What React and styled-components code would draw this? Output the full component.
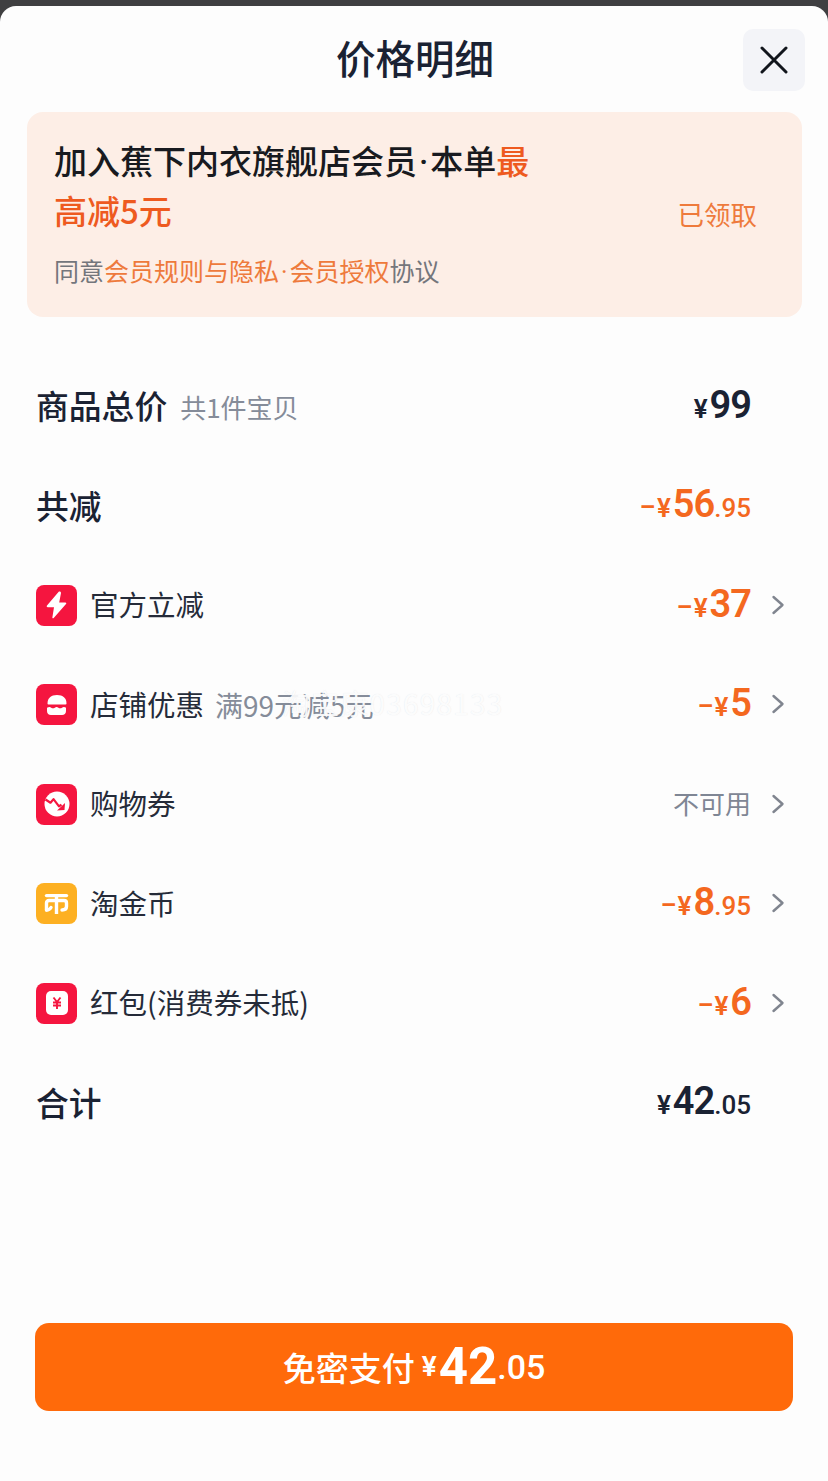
import React from 'react';
import styled, { createGlobalStyle } from 'styled-components';

const Global = createGlobalStyle`
  html, body { margin: 0; padding: 0; background: #3f3f41; }
  body { font-family: "Noto Sans CJK SC", "Noto Sans", sans-serif; }
  * { box-sizing: border-box; }
`;

const Page = styled.div`
  width: 828px;
  height: 1481px;
  padding-top: 6px;
  overflow: hidden;
`;
const Sheet = styled.div`
  height: 1475px;
  background: #fdfdfd;
  border-radius: 16px 16px 0 0;
  display: flex;
  flex-direction: column;
  padding: 23px 23px 70px 27px;
`;
const Header = styled.header`
  display: grid;
  grid-template-columns: 62px 1fr 62px;
  align-items: center;
  height: 62px;
`;
const Title = styled.h1`
  grid-column: 2;
  margin: -6px 2px 0 0;
  text-align: center;
  font-size: 39.5px;
  line-height: 60px;
  font-weight: 500;
  color: #1a2233;
`;
const Close = styled.button`
  grid-column: 3;
  width: 62px;
  height: 62px;
  border: 0;
  border-radius: 10px;
  background: #f3f4f8;
  display: flex;
  align-items: center;
  justify-content: center;
  padding: 0;
`;
const Banner = styled.section`
  margin-top: 21px;
  width: 775px;
  height: 205px;
  background: #fdeee6;
  border-radius: 16px;
  padding: 23px 45px 0 27px;
  display: grid;
  grid-template-columns: 480px 1fr;
  grid-template-rows: 100px auto;
`;
const BannerTitle = styled.div`
  font-size: 33px;
  line-height: 50px;
  font-weight: 500;
  color: #181a20;
`;
const Dot = styled.span`
  font-family: "Roboto", sans-serif;
  line-height: 0;
  margin: 0 ${p => p.$m}px;
`;
const Accent = styled.span`
  color: ${p => p.$c || '#ee5a1f'};
`;
const Claimed = styled.div`
  align-self: end;
  justify-self: end;
  font-size: 26.5px;
  line-height: 36px;
  color: #ee7a3c;
  margin-bottom: 3px;
`;
const Agree = styled.div`
  grid-column: 1 / span 2;
  margin-top: 17px;
  font-size: 25px;
  line-height: 36px;
  color: #74767c;
`;
const Rows = styled.div`
  margin-top: 38px;
  margin-left: 9px;
  display: flex;
  flex-direction: column;
`;
const Row = styled.div`
  position: relative;
  height: 99.5px;
  display: flex;
  align-items: center;
  padding-right: 20px;
`;
const Strong = styled.div`
  font-size: 32.8px;
  font-weight: 500;
  color: #1a2233;
`;
const Sub = styled.span`
  margin: 3px 0 0 ${p => p.$ml}px;
  font-size: ${p => p.$fs}px;
  color: #858c99;
`;
const IconBox = styled.span`
  width: 41px;
  height: 41px;
  margin: 3px 13px 0 0;
  flex: none;
  border-radius: 8px;
  background: ${p => p.$bg || '#f5153f'};
  display: flex;
  align-items: center;
  justify-content: center;
`;
const Label = styled.span`
  font-size: 28.5px;
  color: #252b39;
`;
const Right = styled.div`
  margin-left: auto;
  display: flex;
  align-items: center;
  justify-content: flex-end;
`;
const Amount = styled.div`
  width: 180px;
  margin-right: ${p => (p.$arrow ? 20 : 34)}px;
  text-align: right;
  font-family: "Roboto", sans-serif;
  font-weight: 600;
  white-space: nowrap;
  color: ${p => (p.$orange ? '#f4681f' : '#1a2233')};
`;
const Sign = styled.span`
  font-size: 26px;
  margin-right: 2px;
`;
const Dash = styled.span`
  display: inline-block;
  font-size: 26px;
  transform: translateY(-2px) scaleX(1.8);
  margin-right: 4px;
`;
const Big = styled.span`
  font-size: 38px;
  letter-spacing: -1px;
`;
const Small = styled.span`
  font-size: 26px;
  font-weight: 500;
`;
const Unavailable = styled.span`
  margin-right: 20px;
  font-size: 26px;
  color: #7f8694;
`;
const Watermark = styled.span`
  position: absolute;
  left: 246px;
  top: 50%;
  transform: translateY(-50%);
  font-size: 28px;
  letter-spacing: 1.2px;
  color: rgba(255, 255, 255, 0.9);
  text-shadow: 0 0 1px rgba(190, 195, 205, 0.4);
  white-space: nowrap;
`;
const Pay = styled.button`
  margin-top: auto;
  margin-left: 8px;
  width: 758px;
  height: 88px;
  border: 0;
  border-radius: 14px;
  background: #ff6a0a;
  color: #fff;
  display: flex;
  align-items: center;
  justify-content: center;
  font-family: inherit;
  padding: 0;
`;
const PayLabel = styled.span`
  font-size: 33px;
  font-weight: 500;
  margin-right: 7px;
`;
const PayNum = styled.span`
  font-family: "Roboto", sans-serif;
  font-weight: ${p => p.$w};
  font-size: ${p => p.$fs}px;
  margin-right: ${p => p.$mr || 0}px;
  line-height: 60px;
`;

const Chevron = () => (
  <svg width="14" height="20" viewBox="0 0 14 20" fill="none" stroke="#80858f" strokeWidth="2.4" strokeLinecap="round" strokeLinejoin="round" style={{ marginTop: 2 }}>
    <path d="M2.5 2l9 8-9 8" />
  </svg>
);
const X = () => (
  <svg width="28" height="28" viewBox="0 0 28 28" fill="none" stroke="#11151c" strokeWidth="3" strokeLinecap="round">
    <path d="M2 2l24 24M26 2L2 26" />
  </svg>
);
const Bolt = () => (
  <svg width="21" height="28" viewBox="0 0 21 28" fill="#fff">
    <path d="M12.500 1 1 14.500c-.6.8-.2 1.700.8 1.700h6.200L6.400 26.300c-.2 1 .7 1.300 1.300.6L20 13c.6-.7.3-1.600-.7-1.600h-6.100L15 2c.2-1.200-1.600-2-2.500-1z" />
  </svg>
);
const Store = () => (
  <svg width="22" height="22" viewBox="0 0 22 22" fill="#fff">
    <path d="M1.500 9.500C1.500 4 5 1 11 1s9.500 3 9.500 8.500c0 .6-.3.9-.9.900H2.400c-.6 0-.9-.3-.9-.900z" />
    <path d="M1 13.800c2-.9 3-.9 4.200-.1 1.200.8 2.400.8 3.600 0 1.200-.8 2.400-.8 3.600 0 1.200.8 2.400.8 3.600 0 1.200-.8 2.800-.8 4.000.1v3.200c0 2.400-1.600 4-4 4H5c-2.400 0-4-1.600-4-4z" />
  </svg>
);
const Coupon = () => (
  <svg width="26" height="26" viewBox="0 0 26 26">
    <circle cx="13" cy="13" r="12.500" fill="#fff" />
    <path d="M1.500 8.500l5 3.200 3-3.600 5.500 7.200 2.500-1.500" fill="none" stroke="#f5153f" strokeWidth="2.200" strokeLinejoin="round" />
    <path d="M13 19.500l7.500-.5.500-7z" fill="#f5153f" />
  </svg>
);
const Coin = () => (
  <svg width="25" height="22" viewBox="0 0 25 22" fill="none" stroke="#fff" strokeWidth="3.400">
    <path d="M2.500 2.600h20" strokeLinecap="round" />
    <path d="M12.500 3v18" />
    <path d="M2.500 17V10c0-1.500 1-2.500 2.500-2.500h15c1.500 0 2.500 1 2.500 2.500v3.500c0 2.500-1.500 3.500-4.500 3.500" strokeLinecap="round" />
    <path d="M2.500 17c2 0 3.500-.8 4.500-2.500" strokeLinecap="round" />
  </svg>
);
const Packet = () => (
  <svg width="22" height="24" viewBox="0 0 22 24">
    <rect width="22" height="24" rx="5" fill="#fff" />
    <path d="M7.500 6.500l3.500 4.500 3.500-4.500M7 11.500h8M7 14.500h8M11 11v7" fill="none" stroke="#f5153f" strokeWidth="1.900" />
  </svg>
);

const Money = ({ minus, big, small, orange, arrow }) => (
  <Amount $orange={orange} $arrow={arrow}>
    {minus && <Dash>-</Dash>}
    <Sign>¥</Sign>
    <Big>{big}</Big>
    {small && <Small>{small}</Small>}
  </Amount>
);

export default function App() {
  return (
    <Page>
      <Global />
      <Sheet>
        <Header>
          <Title>价格明细</Title>
          <Close aria-label="关闭"><X /></Close>
        </Header>
        <Banner>
          <BannerTitle>加入蕉下内衣旗舰店会员<Dot $m={2}>·</Dot>本单<Accent>最高减5元</Accent></BannerTitle>
          <Claimed>已领取</Claimed>
          <Agree>同意<Accent $c="#ee7a3c">会员规则与隐私<Dot $m={2}>·</Dot>会员授权</Accent>协议</Agree>
        </Banner>
        <Rows>
          <Row>
            <Strong>商品总价</Strong>
            <Sub $ml={13} $fs={26}>共1件宝贝</Sub>
            <Right><Money big="99" /></Right>
          </Row>
          <Row>
            <Strong>共减</Strong>
            <Right><Money minus big="56" small=".95" orange /></Right>
          </Row>
          <Row>
            <IconBox><Bolt /></IconBox>
            <Label>官方立减</Label>
            <Right><Money minus big="37" orange arrow /><Chevron /></Right>
          </Row>
          <Row>
            <IconBox><Store /></IconBox>
            <Label>店铺优惠</Label>
            <Sub $ml={11} $fs={28}>满99元减5元</Sub>
            <Watermark>淘宝康03698133</Watermark>
            <Right><Money minus big="5" orange arrow /><Chevron /></Right>
          </Row>
          <Row>
            <IconBox><Coupon /></IconBox>
            <Label>购物券</Label>
            <Right><Unavailable>不可用</Unavailable><Chevron /></Right>
          </Row>
          <Row>
            <IconBox $bg="#fdb022"><Coin /></IconBox>
            <Label>淘金币</Label>
            <Right><Money minus big="8" small=".95" orange arrow /><Chevron /></Right>
          </Row>
          <Row>
            <IconBox><Packet /></IconBox>
            <Label>红包(消费券未抵)</Label>
            <Right><Money minus big="6" orange arrow /><Chevron /></Right>
          </Row>
          <Row>
            <Strong>合计</Strong>
            <Right><Money big="42" small=".05" /></Right>
          </Row>
        </Rows>
        <Pay>
          <PayLabel>免密支付</PayLabel>
          <PayNum $fs={28} $w={600} $mr={2}>¥</PayNum>
          <PayNum $fs={51} $w={700}>42</PayNum>
          <PayNum $fs={34} $w={500}>.05</PayNum>
        </Pay>
      </Sheet>
    </Page>
  );
}
